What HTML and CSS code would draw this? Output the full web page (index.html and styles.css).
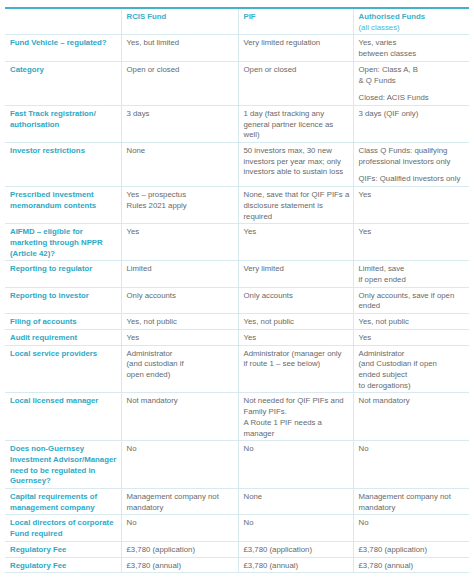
FILE: index.html
```html
<!DOCTYPE html>
<html lang="en">
<head>
<meta charset="utf-8">
<title>Fund comparison</title>
<link rel="stylesheet" href="styles.css">
</head>
<body>
<table class="cmp">
  <colgroup>
    <col class="c0"><col class="c1"><col class="c2"><col class="c3">
  </colgroup>
  <thead>
    <tr>
      <th></th>
      <th>RCIS Fund</th>
      <th>PIF</th>
      <th>Authorised Funds<br><span class="sub">(all classes)</span></th>
    </tr>
  </thead>
  <tbody>
    <tr><th>Fund Vehicle – regulated?</th><td>Yes, but limited</td><td>Very limited regulation</td><td>Yes, varies<br>between classes</td></tr>
    <tr><th>Category</th><td>Open or closed</td><td>Open or closed</td><td>Open: Class A, B<br>&amp; Q Funds<p class="para">Closed: ACIS Funds</p></td></tr>
    <tr><th>Fast Track registration/<br>authorisation</th><td>3 days</td><td>1 day (fast tracking any<br>general partner licence as<br>well)</td><td>3 days (QIF only)</td></tr>
    <tr><th>Investor restrictions</th><td>None</td><td>50 investors max, 30 new<br>investors per year max; only<br>investors able to sustain loss</td><td>Class Q Funds: qualifying<br>professional investors only<p class="para">QIFs: Qualified investors only</p></td></tr>
    <tr><th>Prescribed investment<br>memorandum contents</th><td>Yes – prospectus<br>Rules 2021 apply</td><td>None, save that for QIF PIFs a<br>disclosure statement is<br>required</td><td>Yes</td></tr>
    <tr><th>AIFMD – eligible for<br>marketing through NPPR<br>(Article 42)?</th><td>Yes</td><td>Yes</td><td>Yes</td></tr>
    <tr><th>Reporting to regulator</th><td>Limited</td><td>Very limited</td><td>Limited, save<br>if open ended</td></tr>
    <tr><th>Reporting to investor</th><td>Only accounts</td><td>Only accounts</td><td>Only accounts, save if open<br>ended</td></tr>
    <tr><th>Filing of accounts</th><td>Yes, not public</td><td>Yes, not public</td><td>Yes, not public</td></tr>
    <tr><th>Audit requirement</th><td>Yes</td><td>Yes</td><td>Yes</td></tr>
    <tr><th>Local service providers</th><td>Administrator<br>(and custodian if<br>open ended)</td><td>Administrator (manager only<br>if route 1 – see below)</td><td>Administrator<br>(and Custodian if open<br>ended subject<br>to derogations)</td></tr>
    <tr><th>Local licensed manager</th><td>Not mandatory</td><td>Not needed for QIF PIFs and<br>Family PIFs.<br>A Route 1 PIF needs a<br>manager</td><td>Not mandatory</td></tr>
    <tr><th>Does non-Guernsey<br>Investment Advisor/Manager<br>need to be regulated in<br>Guernsey?</th><td>No</td><td>No</td><td>No</td></tr>
    <tr><th>Capital requirements of<br>management company</th><td>Management company not<br>mandatory</td><td>None</td><td>Management company not<br>mandatory</td></tr>
    <tr><th>Local directors of corporate<br>Fund required</th><td>No</td><td>No</td><td>No</td></tr>
    <tr><th>Regulatory Fee</th><td>£3,780 (application)</td><td>£3,780 (application)</td><td>£3,780 (application)</td></tr>
    <tr><th>Regulatory Fee</th><td>£3,780 (annual)</td><td>£3,780 (annual)</td><td>£3,780 (annual)</td></tr>
  </tbody>
</table>
</body>
</html>
```

FILE: styles.css
```css
html, body {
  margin: 0;
  padding: 0;
  background: #ffffff;
}

body {
  font-family: "Liberation Sans", Arial, sans-serif;
  font-size: 7.8px;
  line-height: 10.7px;
  color: #666a6c;
}

.cmp {
  margin: 7px 0 0 5px;
  width: 464px;
  table-layout: fixed;
  border-collapse: collapse;
  border-top: 2px solid #43b1ca;
}

.c0 { width: 116px; }
.c1 { width: 117px; }
.c2 { width: 115px; }
.c3 { width: 116px; }

.cmp th,
.cmp td {
  vertical-align: top;
  text-align: left;
  padding: 3px 0 1px 5px;
  border-bottom: 1px solid #d8eaf0;
  white-space: nowrap;
  overflow: hidden;
}

.cmp th + th,
.cmp th + td,
.cmp td + td {
  border-left: 1px solid #d8eaf0;
}

.cmp th {
  color: #2ea8c5;
  font-weight: bold;
}

.cmp thead th {
  font-weight: bold;
  color: #3aafc9;
}

.cmp td {
  font-weight: normal;
}

.sub {
  font-weight: normal;
  color: #4cb6cd;
}

.para {
  margin: 7px 0 0 0;
}
```
